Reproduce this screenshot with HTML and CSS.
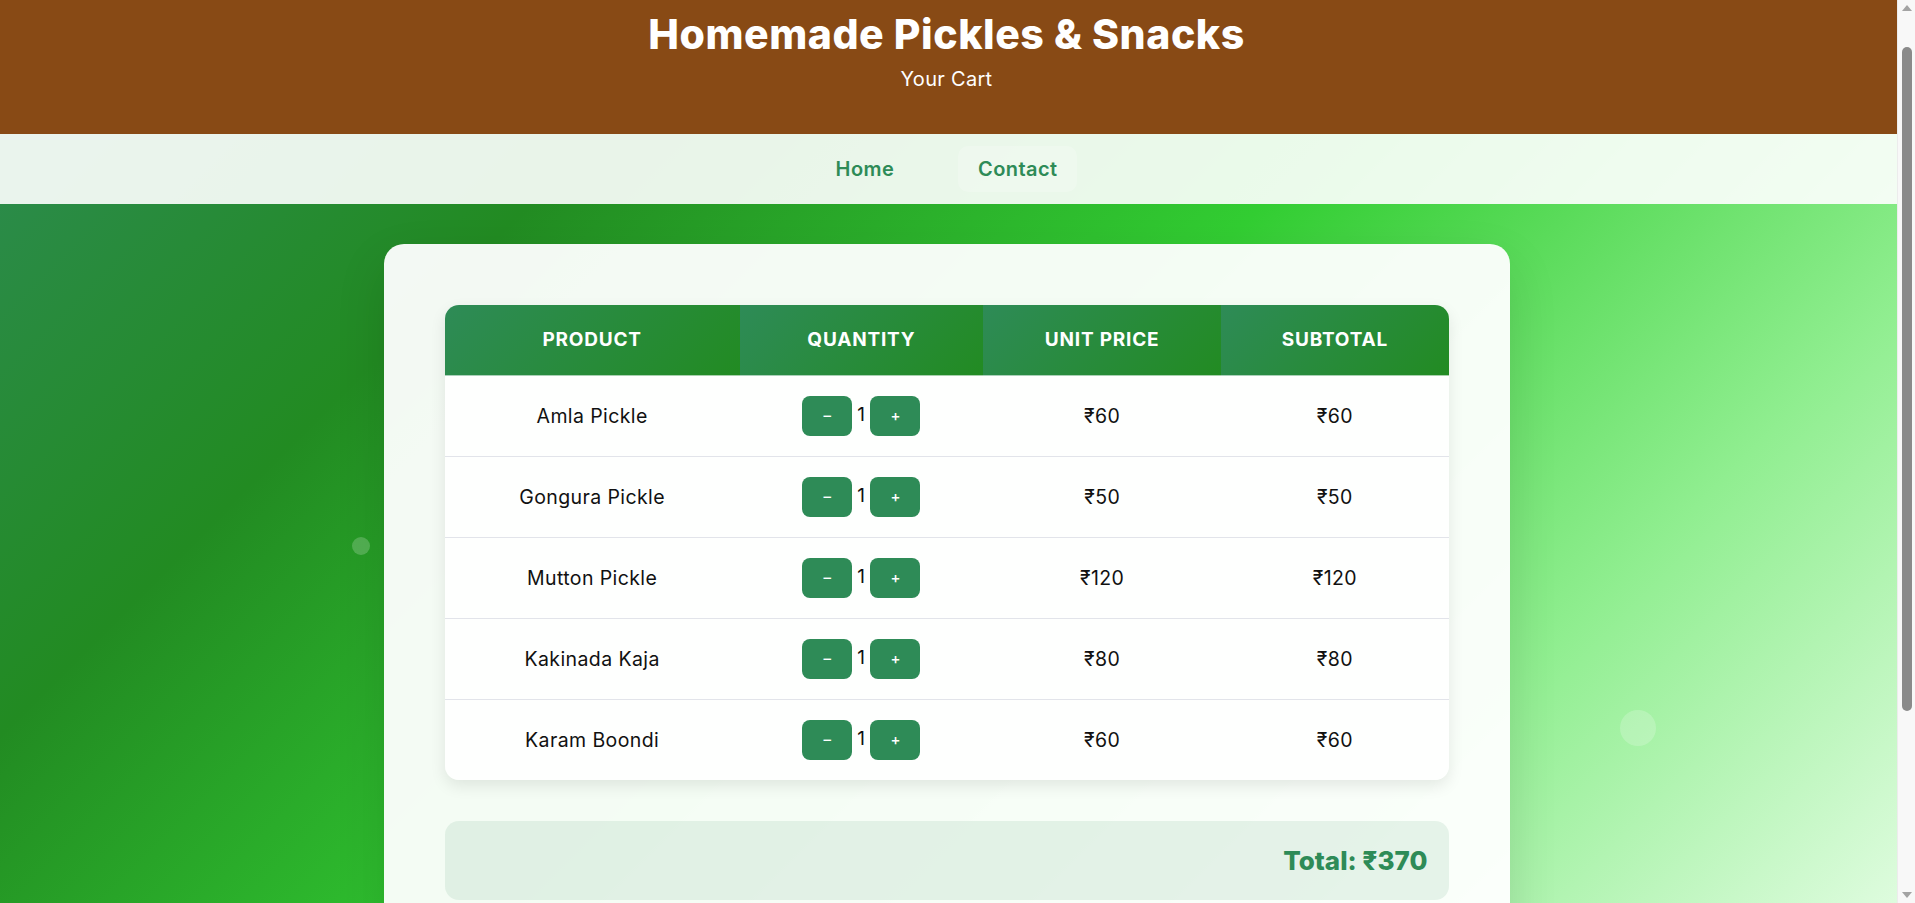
FILE: index.html
```html
<!DOCTYPE html>
<html lang="en">
<head>
<meta charset="utf-8">
<title>Your Cart - Homemade Pickles &amp; Snacks</title>
<link rel="stylesheet" href="styles.css">
</head>
<body>
<header class="site-header">
  <h1 class="site-title">Homemade Pickles &amp; Snacks</h1>
  <p class="site-subtitle">Your Cart</p>
</header>
<nav class="site-nav">
  <a class="nav-link" href="#">Home</a>
  <a class="nav-link nav-link-active" href="#">Contact</a>
</nav>
<main class="page">
  <section class="cart-card">
    <table class="cart-table">
      <thead>
        <tr>
          <th class="col-product">Product</th>
          <th class="col-qty">Quantity</th>
          <th class="col-price">Unit Price</th>
          <th class="col-subtotal">Subtotal</th>
        </tr>
      </thead>
      <tbody>
        <tr>
          <td>Amla Pickle</td>
          <td><div class="qty"><button class="qty-btn">–</button><span class="qty-value">1</span><button class="qty-btn">+</button></div></td>
          <td>₹60</td>
          <td>₹60</td>
        </tr>
        <tr>
          <td>Gongura Pickle</td>
          <td><div class="qty"><button class="qty-btn">–</button><span class="qty-value">1</span><button class="qty-btn">+</button></div></td>
          <td>₹50</td>
          <td>₹50</td>
        </tr>
        <tr>
          <td>Mutton Pickle</td>
          <td><div class="qty"><button class="qty-btn">–</button><span class="qty-value">1</span><button class="qty-btn">+</button></div></td>
          <td>₹120</td>
          <td>₹120</td>
        </tr>
        <tr>
          <td>Kakinada Kaja</td>
          <td><div class="qty"><button class="qty-btn">–</button><span class="qty-value">1</span><button class="qty-btn">+</button></div></td>
          <td>₹80</td>
          <td>₹80</td>
        </tr>
        <tr>
          <td>Karam Boondi</td>
          <td><div class="qty"><button class="qty-btn">–</button><span class="qty-value">1</span><button class="qty-btn">+</button></div></td>
          <td>₹60</td>
          <td>₹60</td>
        </tr>
      </tbody>
    </table>
    <div class="cart-total">Total: ₹370</div>
  </section>
</main>
<span class="particle particle-small"></span>
<span class="particle particle-large"></span>
<div class="scrollbar" aria-hidden="true">
  <span class="scrollbar-arrow scrollbar-arrow-up"></span>
  <span class="scrollbar-thumb"></span>
  <span class="scrollbar-arrow scrollbar-arrow-down"></span>
</div>
</body>
</html>
```

FILE: styles.css
```css
* {
  box-sizing: border-box;
}

html {
  margin: 0;
}

body {
  margin: 0 18px 0 0;
  position: relative;
  min-height: 100vh;
  font-family: Inter, "Noto Sans", "DejaVu Sans", sans-serif;
  color: #111;
  background: linear-gradient(135deg, #2E8B57 0%, #228B22 25%, #32CD32 50%, #90EE90 75%, #F0FFF0 100%);
}

/* Header */
.site-header {
  height: 134px;
  padding: 9px 4px 0 0;
  background: #884a15;
  color: #fff;
  text-align: center;
}

.site-title {
  margin: 0;
  font-size: 41px;
  line-height: 50px;
  font-weight: 800;
  letter-spacing: 0.55px;
}

.site-subtitle {
  margin: 8px 0 0;
  font-size: 20px;
  line-height: 24px;
  font-weight: 400;
  letter-spacing: 0.3px;
}

/* Navigation */
.site-nav {
  height: 70px;
  padding-right: 4px;
  display: flex;
  justify-content: center;
  align-items: center;
  gap: 44px;
  background: rgba(255, 255, 255, 0.9);
}

.nav-link {
  padding: 8px 20px;
  font-size: 20px;
  line-height: 30px;
  font-weight: 600;
  letter-spacing: 0.4px;
  color: #2E8B57;
  text-decoration: none;
  border-radius: 10px;
}

.nav-link-active {
  background: rgba(255, 255, 255, 0.2);
}

/* Page */
.page {
  padding: 40px 4px 60px 0;
}

.cart-card {
  width: 1126px;
  margin: 0 auto;
  padding: 61px;
  border-radius: 20px;
  background: rgba(255, 255, 255, 0.95);
  box-shadow: 0 20px 50px rgba(0, 0, 0, 0.12);
}

.cart-table {
  width: 100%;
  border-collapse: separate;
  border-spacing: 0;
  border-radius: 14px;
  overflow: hidden;
  background: rgba(255, 255, 255, 0.85);
  box-shadow: 0 6px 16px rgba(0, 0, 0, 0.09);
}

.cart-table th {
  padding: 20px;
  font-size: 19px;
  line-height: 30px;
  font-weight: 700;
  letter-spacing: 0.8px;
  text-transform: uppercase;
  color: #fff;
  background: linear-gradient(135deg, #2E8B57, #228B22);
  border-bottom: 1px solid rgba(255, 255, 255, 0.6);
}

.col-product { width: 295px; }
.col-qty { width: 243px; }
.col-price { width: 238px; }
.col-subtotal { width: 227px; }

.cart-table td {
  padding: 20px;
  text-align: center;
  vertical-align: middle;
  font-size: 19.5px;
  line-height: 29px;
  letter-spacing: 0.4px;
  color: #111;
  border-bottom: 1px solid #e2e4ea;
}

.cart-table tbody tr:last-child td {
  border-bottom: none;
}

.qty {
  display: flex;
  justify-content: center;
  align-items: center;
  height: 40px;
}

.qty-value {
  display: inline-block;
  min-width: 7px;
  font-size: 19px;
  margin-top: -4px;
}

.qty-btn {
  width: 50px;
  height: 40px;
  margin: 0 5px;
  padding: 0;
  border: none;
  border-radius: 8px;
  background: #2E8B57;
  color: #fff;
  font-family: Inter, "Noto Sans", sans-serif;
  font-size: 15px;
  font-weight: 500;
  line-height: 40px;
}

.cart-total {
  margin-top: 41px;
  padding: 20px 21px;
  border-radius: 14px;
  background: rgba(46, 139, 87, 0.1);
  text-align: right;
  font-size: 26px;
  line-height: 39px;
  font-weight: 800;
  color: #2E8B57;
}

/* Decorative floating particles */
.particle {
  position: absolute;
  border-radius: 50%;
  background: rgba(255, 255, 255, 0.2);
}

.particle-small {
  left: 352px;
  top: 537px;
  width: 18px;
  height: 18px;
}

.particle-large {
  left: 1620px;
  top: 710px;
  width: 36px;
  height: 36px;
}

/* Window scrollbar as captured in the reference */
.scrollbar {
  position: fixed;
  top: 0;
  right: 0;
  bottom: 0;
  width: 18px;
  background: #f8f8f8;
  border-left: 1px solid #ececec;
}

.scrollbar-thumb {
  position: absolute;
  left: 4px;
  right: 3px;
  top: 47px;
  height: 664px;
  border-radius: 6px;
  background: #8a8a8a;
}

.scrollbar-arrow {
  position: absolute;
  left: 4px;
  width: 0;
  height: 0;
  border-left: 5px solid transparent;
  border-right: 5px solid transparent;
}

.scrollbar-arrow-up {
  top: 5px;
  border-bottom: 6px solid #a3a3a3;
}

.scrollbar-arrow-down {
  bottom: 5px;
  border-top: 6px solid #a3a3a3;
}
```
